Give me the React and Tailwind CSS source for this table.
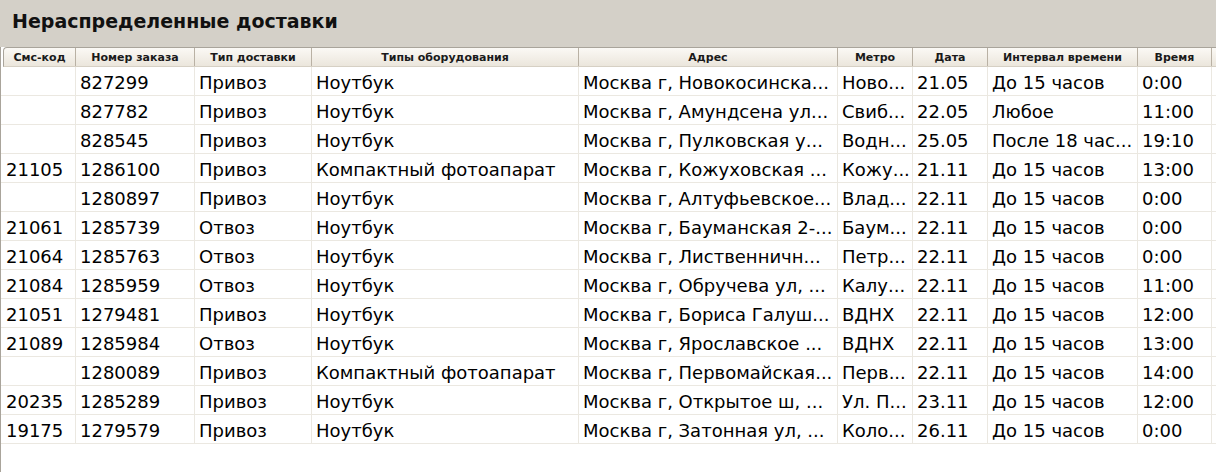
const columns = [
  'Смс-код',
  'Номер заказа',
  'Тип доставки',
  'Типы оборудования',
  'Адрес',
  'Метро',
  'Дата',
  'Интервал времени',
  'Время',
];

const rows = [
  ['', '827299', 'Привоз', 'Ноутбук', 'Москва г, Новокосинска...', 'Ново...', '21.05', 'До 15 часов', '0:00'],
  ['', '827782', 'Привоз', 'Ноутбук', 'Москва г, Амундсена ул...', 'Свиб...', '22.05', 'Любое', '11:00'],
  ['', '828545', 'Привоз', 'Ноутбук', 'Москва г, Пулковская у...', 'Водн...', '25.05', 'После 18 час...', '19:10'],
  ['21105', '1286100', 'Привоз', 'Компактный фотоапарат', 'Москва г, Кожуховская ...', 'Кожу...', '21.11', 'До 15 часов', '13:00'],
  ['', '1280897', 'Привоз', 'Ноутбук', 'Москва г, Алтуфьевское...', 'Влад...', '22.11', 'До 15 часов', '0:00'],
  ['21061', '1285739', 'Отвоз', 'Ноутбук', 'Москва г, Бауманская 2-...', 'Баум...', '22.11', 'До 15 часов', '0:00'],
  ['21064', '1285763', 'Отвоз', 'Ноутбук', 'Москва г, Лиственничн...', 'Петр...', '22.11', 'До 15 часов', '0:00'],
  ['21084', '1285959', 'Отвоз', 'Ноутбук', 'Москва г, Обручева ул, ...', 'Калу...', '22.11', 'До 15 часов', '11:00'],
  ['21051', '1279481', 'Привоз', 'Ноутбук', 'Москва г, Бориса Галуш...', 'ВДНХ', '22.11', 'До 15 часов', '12:00'],
  ['21089', '1285984', 'Отвоз', 'Ноутбук', 'Москва г, Ярославское ...', 'ВДНХ', '22.11', 'До 15 часов', '13:00'],
  ['', '1280089', 'Привоз', 'Компактный фотоапарат', 'Москва г, Первомайская...', 'Перв...', '22.11', 'До 15 часов', '14:00'],
  ['20235', '1285289', 'Привоз', 'Ноутбук', 'Москва г, Открытое ш, ...', 'Ул. П...', '23.11', 'До 15 часов', '12:00'],
  ['19175', '1279579', 'Привоз', 'Ноутбук', 'Москва г, Затонная ул, ...', 'Коло...', '26.11', 'До 15 часов', '0:00'],
];

// body starts at x=1 (after the left border), header at x=4 (margin + border)
const bodyGrid = 'grid grid-cols-[75px_119px_117px_267px_259px_75px_75px_150px_74px_1fr]';
const headGrid = 'grid grid-cols-[72px_119px_117px_267px_259px_75px_75px_150px_74px_1fr]';

export default function App() {
  return (
    <div className="w-[1216px] h-[472px] bg-[#d4d0c8] flex flex-col overflow-hidden font-['DejaVu_Sans',sans-serif] text-black">
      <div className="h-[47px] shrink-0 pl-[12px] pt-[9px]">
        <h1 className="text-[19px] font-bold leading-[24px] text-[#111]">Нераспределенные доставки</h1>
      </div>
      <div className="flex-1 bg-white border-l border-[#a9a49b]">
        <div className={`${headGrid} h-[20px] ml-[2px] border-t border-l border-[#a9a49b] rounded-tl-[4px] bg-gradient-to-b from-[#fbf9f5] to-[#ebe6dc] border-b border-b-[#d6d0c4]`}>
          {columns.map((c) => (
            <div
              key={c}
              className="border-r border-[#b9b1a4] flex items-center justify-center text-[11px] font-bold leading-none text-[#1a1a1a]"
            >
              {c}
            </div>
          ))}
          <div />
        </div>
        {rows.map((r, i) => (
          <div key={i} className={`${bodyGrid} h-[29px] border-b border-[#ebe8e1]`}>
            {r.map((cell, j) => (
              <div
                key={j}
                className={`border-r border-[#ebe8e1] flex items-center pt-[3px] overflow-hidden whitespace-nowrap text-[18px] leading-none ${j === 0 ? 'pl-[5px]' : 'pl-[4px]'}`}
              >
                {cell}
              </div>
            ))}
            <div />
          </div>
        ))}
      </div>
    </div>
  );
}
